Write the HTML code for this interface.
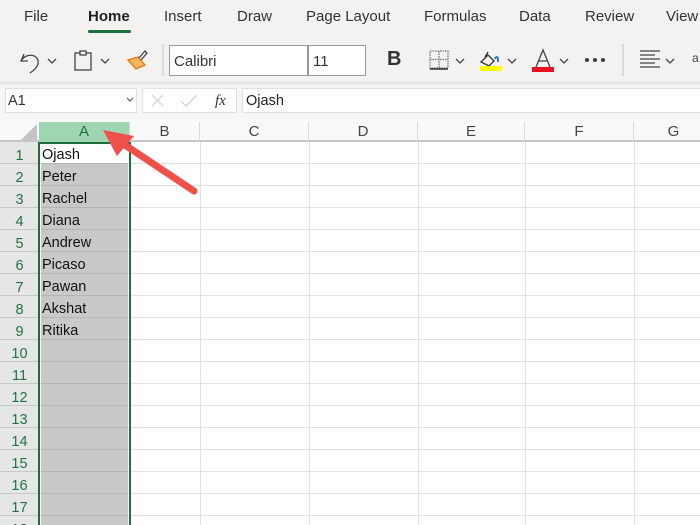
<!DOCTYPE html>
<html><head><style>
*{margin:0;padding:0;box-sizing:border-box}
html,body{width:700px;height:525px;overflow:hidden}
body{background:#fff;font-family:"Liberation Sans",sans-serif;position:relative}
.a{position:absolute}
.tab{position:absolute;top:8px;font-size:15px;color:#333}
.ch{position:absolute;top:122px;height:20px;font-size:15px;color:#444;text-align:center;line-height:20px;border-right:1px solid #dadada}
.rh{position:absolute;left:0;width:39px;height:22px;text-align:center;font-size:14.5px;color:#217346;line-height:22px;padding-top:3px;border-bottom:1px solid #c8c8c8;background:#e6e6e6}
.hl{position:absolute;left:130px;width:570px;height:1px;background:#e1e1e1}
.vl{position:absolute;top:142px;width:1px;height:383px;background:#e1e1e1}
.ca{position:absolute;left:41px;width:87px;height:22px;font-size:14.5px;color:#111;padding-left:1px;line-height:21px;padding-top:3px;border-bottom:1px solid #b5b5b5;background:#c9c9c9}
</style></head><body>
<div class="a" style="left:0;top:0;width:700px;height:82px;background:#f3f2f1"></div>
<div class="a" style="left:0;top:82px;width:700px;height:4px;background:linear-gradient(#dedede,#f6f6f6)"></div>
<div class="a" style="left:0;top:86px;width:700px;height:34px;background:#f6f6f6"></div>
<div class="tab" style="left:24px">File</div>
<div class="tab" style="left:88px;color:#222;font-weight:bold;font-weight:600">Home</div>
<div class="a" style="left:88px;top:30px;width:43px;height:3px;background:#1e6e3e;border-radius:2px"></div>
<div class="tab" style="left:164px">Insert</div>
<div class="tab" style="left:237px">Draw</div>
<div class="tab" style="left:306px">Page Layout</div>
<div class="tab" style="left:424px">Formulas</div>
<div class="tab" style="left:519px">Data</div>
<div class="tab" style="left:585px">Review</div>
<div class="tab" style="left:666px">View</div>
<svg class="a" style="left:0;top:40px" width="700" height="42" fill="none" stroke="#444" stroke-width="1.3">
<path d="M24 14 L21 21 L28 21 M21 21 C26 12 40 14 38 24 C37 28 33 31 30 33"/>
<path d="M48 19 l4 4 l4 -4"/>
<rect x="75" y="13" width="16" height="17"/><rect x="80" y="11" width="6" height="4" fill="#f3f2f1"/>
<path d="M101 19 l4 4 l4 -4"/>
<path d="M128 20 l10 -3 l7 8 l-9 4z" stroke="#e8701a" fill="#f9b85a"/><path d="M139 18 l6 -7 l2 2 l-6 7" stroke="#444"/>
<path d="M296 19 l4 4 l4 -4"/><path d="M350 19 l4 4 l4 -4"/>
<path d="M163 4 v32" stroke="#ccc"/>
<path d="M430 11 h18 v17 h-18z M439 11 v17 M430 19.5 h18" stroke="#777" stroke-dasharray="1.5 1"/><path d="M430 29 h18" stroke="#111"/>
<path d="M456 19 l4 4 l4 -4"/>
<path d="M481 22 l7 -7 l6 6 l-5 5z M485 17 l3 -5" stroke="#333"/><path d="M495 19 c1 -3 3 -2 3 0 v3" stroke="#2a7ad2" stroke-width="2"/>
<rect x="480" y="26" width="22" height="5" fill="#ffff00" stroke="none"/>
<path d="M508 19 l4 4 l4 -4"/>
<path d="M536 27 l7 -17 l7 17 M539 21 h8"/>
<rect x="532" y="27" width="22" height="5" fill="#e81123" stroke="none"/>
<path d="M560 19 l4 4 l4 -4"/>
<circle cx="587" cy="20" r="1.4" fill="#333"/><circle cx="595" cy="20" r="1.4" fill="#333"/><circle cx="603" cy="20" r="1.4" fill="#333"/>
<path d="M623 4 v32" stroke="#ccc"/>
<path d="M640 11 h20 M640 15 h15 M640 19 h20 M640 23 h15 M640 27 h20"/>
<path d="M666 19 l4 4 l4 -4"/>
<text x="692" y="22" font-size="12" fill="#444" stroke="none" font-family="Liberation Sans">a</text>
</svg>
<div class="a" style="left:169px;top:45px;width:139px;height:31px;background:#fff;border:1px solid #999;font-size:15px;color:#333;padding:7px 4px">Calibri</div>
<div class="a" style="left:308px;top:45px;width:58px;height:31px;background:#fff;border:1px solid #999;font-size:15px;color:#333;padding:7px 4px">11</div>
<div class="a" style="left:387px;top:48px;font-size:20px;font-weight:bold;color:#333">B</div>
<div class="a" style="left:5px;top:88px;width:132px;height:25px;background:#fff;border:1px solid #e0e0e0;font-size:14.5px;color:#333;padding:4px 2px">A1</div>
<div class="a" style="left:142px;top:88px;width:95px;height:25px;background:#fff;border:1px solid #e0e0e0"></div>
<div class="a" style="left:242px;top:88px;width:460px;height:25px;background:#fff;border:1px solid #e0e0e0;font-size:14.5px;color:#222;padding:4px 3px">Ojash</div>
<svg class="a" style="left:0;top:88px" width="240" height="25" fill="none" stroke="#555" stroke-width="1.1">
<path d="M127 10 l3 3 l3 -3"/>
<path d="M152 7 l11 11 M163 7 l-11 11" stroke="#ccc"/>
<path d="M181 13 l5 5 l11 -11" stroke="#ccc"/>
<text x="215" y="17" font-size="15" font-style="italic" font-family="Liberation Serif" fill="#333" stroke="none">fx</text>
</svg>
<div class="a" style="left:0;top:120px;width:700px;height:22px;background:#f9f9f9;border-bottom:2px solid #c6c6c6"></div>
<svg class="a" style="left:20px;top:123px" width="18" height="18"><path d="M17 1 V17 H1Z" fill="#c4c4c4"/></svg>
<div class="ch" style="left:39px;width:91px;background:#9fd5b3;color:#1e6e3e;border-bottom:2px solid #1e6e3e;height:22px">A</div>
<div class="ch" style="left:130px;width:70px">B</div>
<div class="ch" style="left:200px;width:109px">C</div>
<div class="ch" style="left:309px;width:109px">D</div>
<div class="ch" style="left:418px;width:107px">E</div>
<div class="ch" style="left:525px;width:109px">F</div>
<div class="ch" style="left:634px;width:80px">G</div>
<div class="vl" style="left:200px"></div><div class="vl" style="left:309px"></div><div class="vl" style="left:418px"></div><div class="vl" style="left:525px"></div><div class="vl" style="left:634px"></div>
<div class="a" style="left:39px;top:142px;width:1px;height:383px;background:#bbb"></div>
<div id="g"></div>
<script>
var n=["Ojash","Peter","Rachel","Diana","Andrew","Picaso","Pawan","Akshat","Ritika"],h="";
for(var i=0;i<18;i++){var t=142+i*22;
h+='<div class="rh" style="top:'+t+'px">'+(i+1)+'</div>';
h+='<div class="hl" style="top:'+(t+21)+'px"></div>';
h+='<div class="ca" style="top:'+t+'px;'+(i==0?'background:#fff;':'')+'">'+(n[i]||'')+'</div>';}
document.getElementById('g').innerHTML=h;
</script>
<div class="a" style="left:38px;top:142px;width:93px;height:400px;border:2px solid #1e6e3e"></div>
<svg class="a" style="left:0;top:0" width="700" height="525">
<line x1="194" y1="191" x2="122" y2="143" stroke="#f0504a" stroke-width="7" stroke-linecap="round"/>
<path d="M103 130 L134 136 L117 156Z" fill="#f0504a"/>
</svg>
</body></html>
